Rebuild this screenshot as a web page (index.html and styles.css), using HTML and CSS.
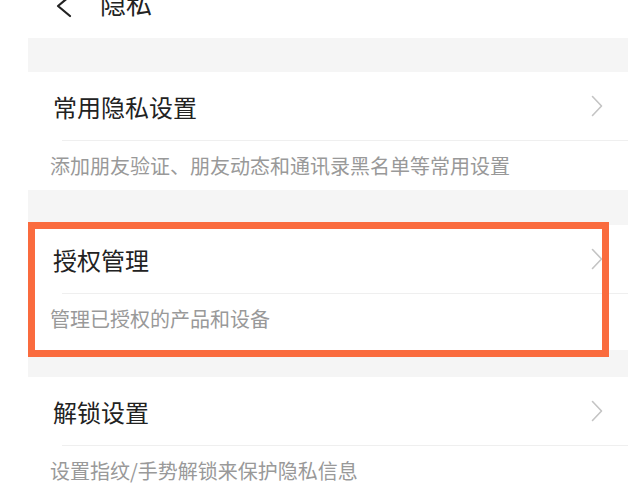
FILE: index.html
```html
<!DOCTYPE html>
<html lang="zh-CN">
<head>
<meta charset="utf-8">
<title>隐私</title>
<link rel="stylesheet" href="styles.css">
</head>
<body>
<div class="page">
  <header class="topbar">
    <svg class="back" width="20" height="26" viewBox="0 0 20 26" aria-hidden="true">
      <polyline points="16,-2 4,8 16,18" fill="none" stroke="#222" stroke-width="2.2" stroke-linecap="round" stroke-linejoin="round"/>
    </svg>
    <span class="topbar-title">隐私</span>
  </header>
  <main class="list">
    <div class="band"></div>
    <section class="group">
      <div class="row-title">
        <span>常用隐私设置</span>
        <svg class="chev" width="12" height="22" viewBox="0 0 12 22" aria-hidden="true"><polyline points="1.5,1.5 10.5,11 1.5,20.5" fill="none" stroke="#c4c4c4" stroke-width="1.6" stroke-linecap="round" stroke-linejoin="round"/></svg>
      </div>
      <div class="divider"></div>
      <div class="row-desc">添加朋友验证、朋友动态和通讯录黑名单等常用设置</div>
    </section>
    <div class="band band--short"></div>
    <section class="group group--marked">
      <div class="row-title">
        <span>授权管理</span>
        <svg class="chev" width="12" height="22" viewBox="0 0 12 22" aria-hidden="true"><polyline points="1.5,1.5 10.5,11 1.5,20.5" fill="none" stroke="#c4c4c4" stroke-width="1.6" stroke-linecap="round" stroke-linejoin="round"/></svg>
      </div>
      <div class="divider"></div>
      <div class="row-desc">管理已授权的产品和设备</div>
      <div class="mark"></div>
    </section>
    <div class="band band--after"></div>
    <section class="group">
      <div class="row-title">
        <span>解锁设置</span>
        <svg class="chev" width="12" height="22" viewBox="0 0 12 22" aria-hidden="true"><polyline points="1.5,1.5 10.5,11 1.5,20.5" fill="none" stroke="#c4c4c4" stroke-width="1.6" stroke-linecap="round" stroke-linejoin="round"/></svg>
      </div>
      <div class="divider"></div>
      <div class="row-desc">设置指纹/手势解锁来保护隐私信息</div>
    </section>
  </main>
</div>
</body>
</html>
```
FILE: styles.css
```css
html, body {
  margin: 0;
  padding: 0;
  background: #ffffff;
}
body {
  font-family: "Noto Sans CJK SC", "Noto Sans", sans-serif;
  color: #222222;
  overflow: hidden;
}
.page {
  width: 637px;
  height: 493px;
  overflow: hidden;
}
.topbar {
  height: 38px;
  display: flex;
  align-items: flex-start;
  padding-left: 54px;
  box-sizing: border-box;
}
.back {
  display: block;
  margin-top: -2px;
}
.topbar-title {
  margin-left: 26px;
  margin-top: -12px;
  font-size: 26px;
  line-height: 30px;
  color: #222;
  letter-spacing: 0;
}
.list {
  margin-left: 28px;
  width: 600px;
}
.band {
  height: 34px;
  background: #f5f5f5;
}
.band--short {
  height: 35px;
}
.band--after {
  height: 27px;
}
.group {
  background: #ffffff;
  position: relative;
}
.group--marked {
  padding-bottom: 7px;
}
.row-title {
  height: 68px;
  display: flex;
  align-items: center;
  justify-content: space-between;
  padding: 0 25px 0 25px;
  font-size: 24px;
  color: #222;
}
.chev {
  display: block;
}
.divider {
  height: 1px;
  margin-left: 34px;
  background: #efefef;
}
.row-desc {
  height: 49px;
  display: flex;
  align-items: center;
  padding-left: 22px;
  font-size: 20px;
  color: #999999;
}
.mark {
  position: absolute;
  left: 0;
  top: -3px;
  width: 581px;
  height: 135px;
  border: 7px solid #fa6b3e;
  box-sizing: border-box;
  pointer-events: none;
}
```
